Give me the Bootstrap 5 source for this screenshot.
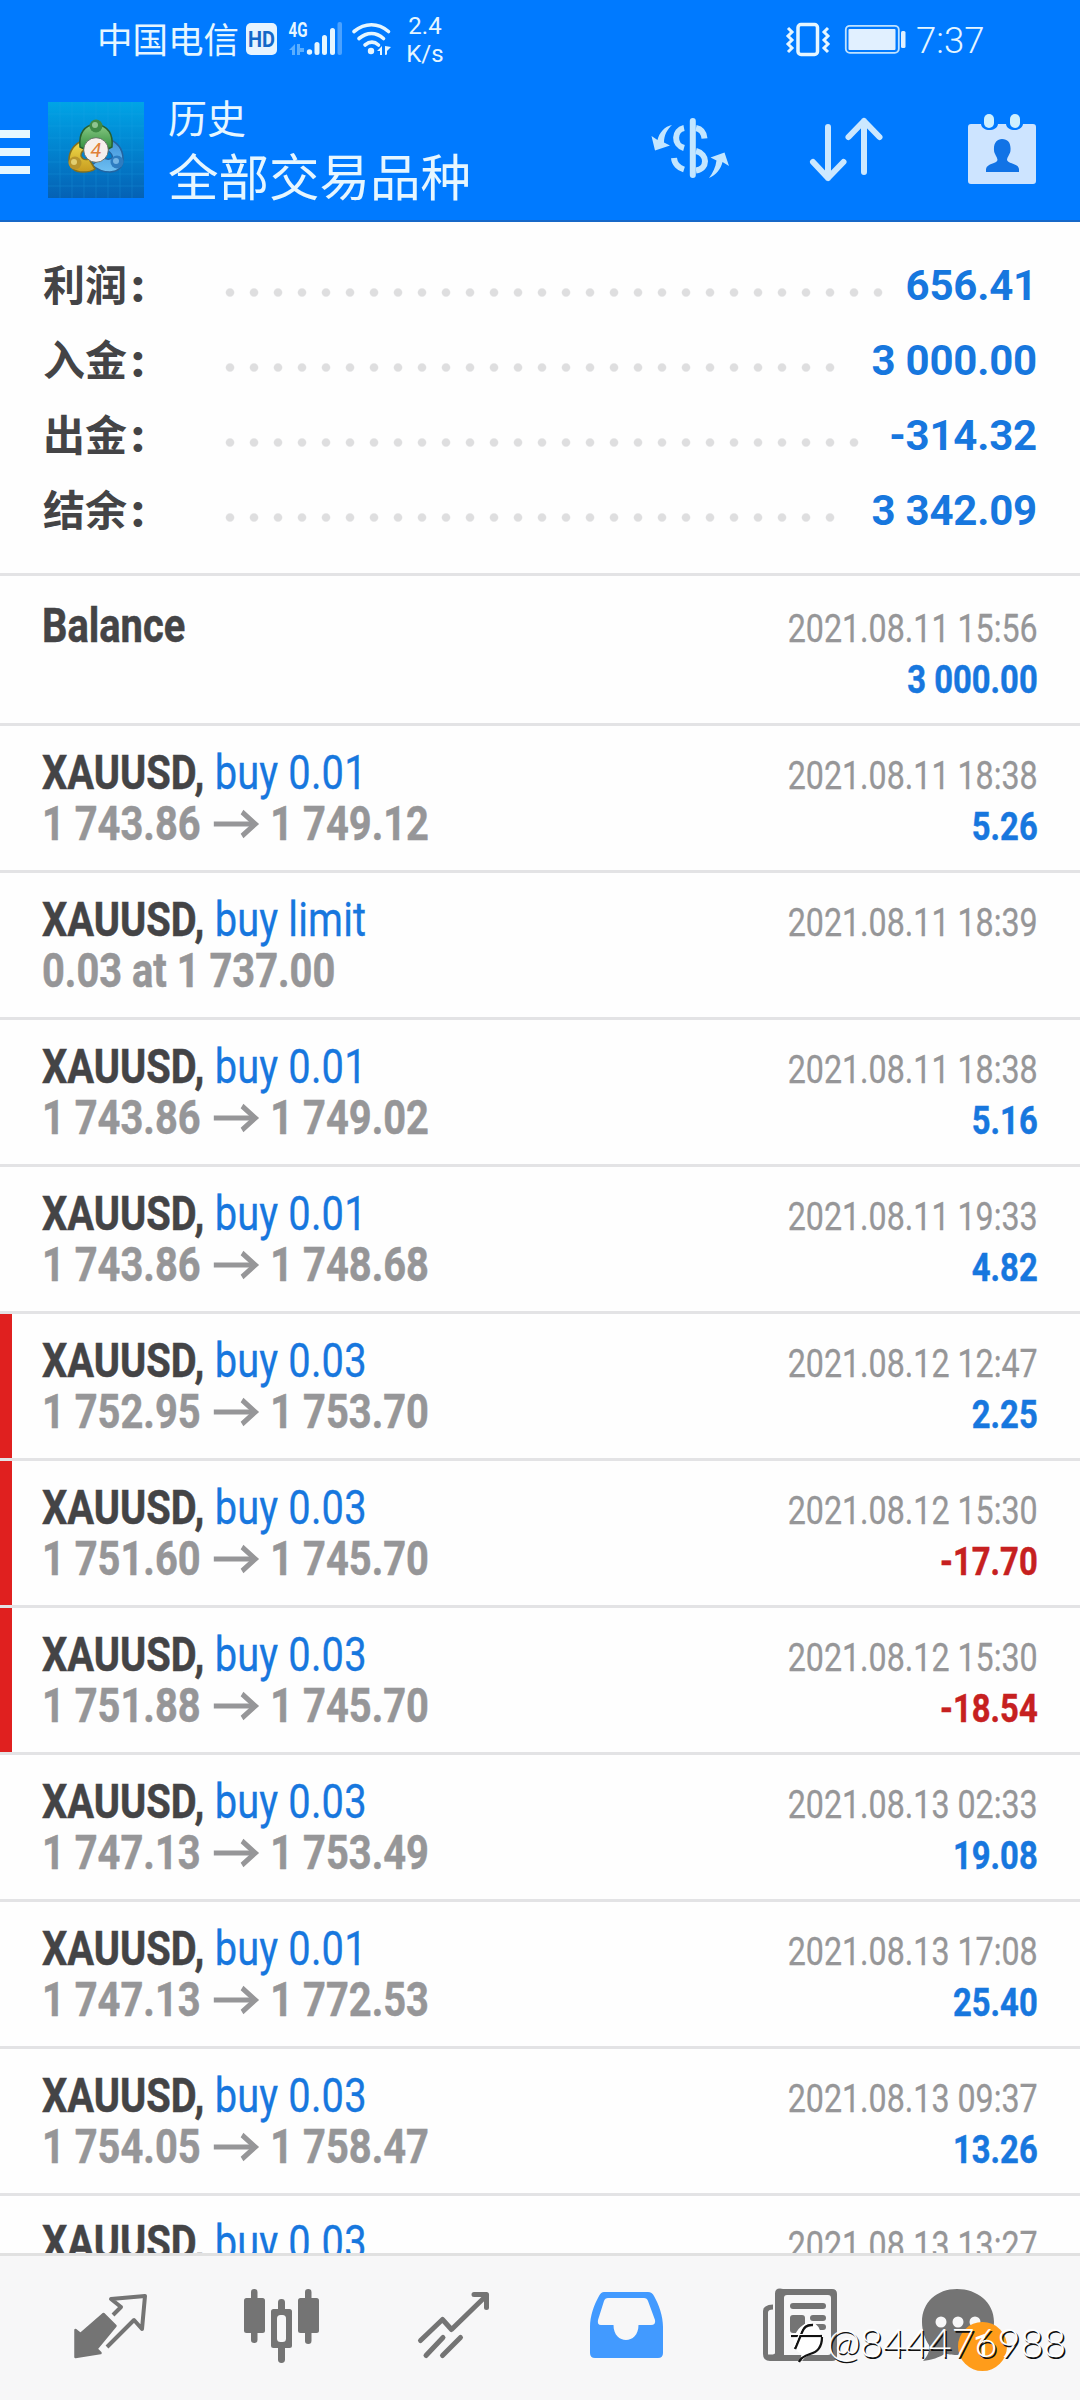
<!DOCTYPE html>
<html lang="zh-CN">
<head>
<meta charset="utf-8">
<meta name="viewport" content="width=device-width, initial-scale=1">
<title>历史</title>
<link href="https://cdn.jsdelivr.net/npm/bootstrap@5.3.0/dist/css/bootstrap.min.css" rel="stylesheet">
<style>
  :root { --brand:#007aff; --ink:#444446; --mute:#969698; --money:#1777de; --rule:#e3e3e5; }
  body { font-family:Roboto,"Noto Sans CJK SC",sans-serif; width:1080px; height:2400px; overflow:hidden; background:#fefefe; color:var(--ink); }
  svg { display:block; flex:none; overflow:visible; }
  .app-shell { height:2400px; }
  .app-head { height:222px; background:var(--brand); border-bottom:2px solid #1768c8; color:#e6f6ff; }
  .status-bar { height:78px; padding-left:97px; padding-right:96px; }
  .carrier { font-size:35.5px; line-height:78px; width:149px; padding-top:4px; }
  .net-rate { font-size:24px; line-height:28px; width:40px; padding-top:2px; margin-left:14px; }
  .clock { font-size:36.5px; font-weight:350; line-height:78px; width:68px; white-space:nowrap; margin-left:10px; padding-top:3px; }
  .title-bar { height:142px; }
  .titles { padding:17px 0 0 24px; }
  .t-small { font-size:39px; line-height:50px; }
  .t-big { font-size:50.5px; line-height:66px; margin-top:1px; }
  .totals { height:351px; padding:27px 43px 0 43px; font-weight:700; font-size:42px; }
  .total-line { height:75px; }
  .total-line .lbl { width:175px; line-height:75px; }
  .total-line .lbl i { font-style:normal; margin-left:5px; display:inline-block; -webkit-text-stroke:2px currentColor; }
  .total-line .num { color:var(--money); line-height:74px; letter-spacing:-.2px; }
  .leader { height:75px; width:calc(var(--n)*24px); background:radial-gradient(circle,#dededf 3.6px,transparent 4.800px) 0 6px/24px 75px repeat-x; }
  .deal { height:147px; border-top:3px solid var(--rule); padding:21px 42px 0 42px; font-size:48px; line-height:51px; white-space:nowrap; }
  .deal.first { height:150px; padding-top:24px; }
  .deal.flagged { background:linear-gradient(#e0201f,#e0201f) 0 0/12px 100% no-repeat; }
  .cond { transform:scaleX(.83); transform-origin:0 50%; font-weight:700; height:51px; -webkit-text-stroke:.5px currentColor; }
  .cond .sym { width:208px; }
  .cond .act { color:var(--money); font-weight:400; -webkit-text-stroke:.3px currentColor; letter-spacing:.2px; }
  .prices { color:var(--mute); }
  .rt { padding-top:4px; font-size:39px; text-align:right; }
  .rt .cond { transform:scaleX(.84); transform-origin:100% 50%; }
  .rt .stamp { color:var(--mute); font-weight:400; transform:scaleX(.826); -webkit-text-stroke:.3px currentColor; }
  .gain { color:var(--money); }
  .loss { color:#c62020; }
  .arrow-r { margin:0 14px 0 16px; }
  .deal-list { height:1680px; overflow:hidden; flex:none; }
  .tab-bar { height:147px; background:#f7f7f8; border-top:3px solid #e1e1e1; position:relative; }
  .pill-count { position:absolute; left:958px; top:66px; width:49px; height:49px; border-radius:50%; background:#ff9c1a; color:#fff; font-size:34px; line-height:49px; text-align:center; }
  .wm { position:absolute; left:790px; top:58px; color:#fff; font-family:Lato,sans-serif; font-size:40px; font-weight:300; line-height:56px; text-shadow:1.5px 1.5px .5px #111; }
  .wm span { letter-spacing:-.3px; }
</style>
</head>
<body>
<div class="app-shell d-flex flex-column">
  <header class="app-head flex-shrink-0">
    <div class="status-bar d-flex align-items-center">
      <div class="carrier flex-shrink-0">中国电信</div>
      <svg width="145" height="36" viewBox="246 21 145 36">
        <rect x="246" y="23" width="31" height="32" rx="5" fill="#e6f4ff"/>
        <text x="261.500" y="47" font-family="Roboto" font-size="22" font-weight="700" fill="#1468c8" text-anchor="middle" textLength="27" lengthAdjust="spacingAndGlyphs">HD</text>
        <text x="288.500" y="37" font-family="Roboto" font-size="20" font-weight="700" fill="#e6f6ff" textLength="19" lengthAdjust="spacingAndGlyphs">4G</text>
        <g fill="#5aaeff"><path d="M289 50l6-6v11h-3v-5zM297 44h3v4h4v4h-4v3h-3z"/></g>
        <g fill="#e6f6ff"><circle cx="309.500" cy="52" r="2.700"/><rect x="314.500" y="42" width="5" height="13" rx="2.500"/><rect x="322" y="35" width="5" height="20" rx="2.500"/><rect x="330" y="28" width="5" height="27" rx="2.500"/></g>
        <rect x="337.500" y="22" width="4.500" height="33" rx="2" fill="#4ba2ff"/>
        <g fill="none" stroke="#e6f6ff" stroke-width="3.600" stroke-linecap="round"><path d="M354 31.500c11-9 24-9 34.500 0M359 38.500c8-6.500 17-6.500 24.500 0M365 45c5-4 9-4 13.500 0"/></g>
        <circle cx="371" cy="51" r="3.200" fill="#e6f6ff"/>
        <path d="M377 51l5-5v9h-2v-4zM385 46v9l2-.5V51l4-4z" fill="#e6f6ff"/>
      </svg>
      <div class="net-rate text-center">2.4<br>K/s</div>
      <svg class="ms-auto me-3" width="42" height="34" viewBox="786 22 42 34" fill="none" stroke="#e6f6ff">
        <rect x="797" y="24.500" width="19.500" height="30" rx="3" stroke-width="3.500"/>
        <path d="M787 28l4 4-4 4 4 4-4 4 4 4-4 4M827 28l-4 4 4 4-4 4 4 4-4 4 4 4" stroke-width="3"/>
      </svg>
      <svg width="61" height="30" viewBox="844 24 61 30">
        <rect x="844.800" y="25.800" width="53" height="27" rx="4" fill="none" stroke="#bfe2ff" stroke-width="1.800"/>
        <rect x="847.500" y="29" width="47" height="21" rx="1" fill="#e1f0ff"/>
        <rect x="900" y="31" width="4.500" height="17" rx="1.500" fill="#e1f0ff"/>
      </svg>
      <div class="clock flex-shrink-0">7:37</div>
    </div>
    <div class="title-bar d-flex">
      <svg width="48" height="142" viewBox="0 78 48 142" fill="#e6f8ff"><path d="M0 130h30v8H0zM0 148h30v8H0zM0 166h30v8H0z"/></svg>
      <svg width="96" height="142" viewBox="48 78 96 142">
        <defs>
          <linearGradient id="lgBg" x1="0" y1="0" x2="0" y2="1"><stop offset="0" stop-color="#00a4e6"/><stop offset=".5" stop-color="#0283cf"/><stop offset="1" stop-color="#0561b4"/></linearGradient>
          <linearGradient id="lgG" x1="0" y1="0" x2="0" y2="1"><stop offset="0" stop-color="#8ccb86"/><stop offset="1" stop-color="#2f8c3c"/></linearGradient>
          <linearGradient id="lgY" x1="0" y1="0" x2="0" y2="1"><stop offset="0" stop-color="#f2e04e"/><stop offset="1" stop-color="#c79a1e"/></linearGradient>
          <linearGradient id="lgB" x1="0" y1="0" x2="0" y2="1"><stop offset="0" stop-color="#3c8fd8"/><stop offset="1" stop-color="#6fc0f2"/></linearGradient>
        </defs>
        <rect x="48" y="102" width="96" height="96" fill="url(#lgBg)"/>
        <path d="M60 102v96M72 102v96M84 102v96M96 102v96M108 102v96M120 102v96M132 102v96M48 114h96M48 126h96M48 138h96M48 150h96M48 162h96M48 174h96M48 186h96" stroke="#25a8ea" stroke-width=".8" opacity=".3"/>
        <g stroke-width="1.500">
          <path d="M107 138q16 6 16 21 0 12-13 13-10 0-18-7l10-8q6 4 10 1 2-3-5-8z" fill="url(#lgB)" stroke="#2464a0"/>
          <path d="M83 140q-14 7-14 20 1 12 14 12 8 0 12-3l-6-10q-6 2-8-3-1-5 7-8z" fill="url(#lgY)" stroke="#83701e"/>
          <path d="M80 147q-2-21 16-23 18 3 16 23l-6 3-10-10-10 10z" fill="url(#lgG)" stroke="#27602f"/>
        </g>
        <circle cx="96" cy="126" r="6.500" fill="#3f8a45"/><circle cx="75" cy="163" r="6.500" fill="#b8952c"/><circle cx="117" cy="162" r="6.500" fill="#2e7cc0"/>
        <circle cx="95" cy="125" r="3" fill="#8fc48f"/><circle cx="74" cy="162" r="3" fill="#e2cf70"/><circle cx="116" cy="161" r="3" fill="#74b4e4"/>
        <circle cx="96" cy="150" r="12.300" fill="#f6efec" stroke="#55605a" stroke-width=".8"/>
        <text x="96" y="157" font-family="Roboto" font-size="20" font-style="italic" text-anchor="middle" fill="#e0813a">4</text>
      </svg>
      <div class="titles d-flex flex-column">
        <div class="t-small">历史</div>
        <div class="t-big">全部交易品种</div>
      </div>
      <svg class="ms-auto" width="430" height="142" viewBox="650 78 430 142">
        <path fill="#c3e6ff" d="M672 125c-7 1-13 8-14.500 15l-6-4 3.500 14.500 15-5-6-3c0-7 3-13 8-17.500zM709 178c7-3 12-9 13.500-16l6.500 4-4.500-13.500-14 5 6 3c-1 7-3.500 12-7.500 17.500z"/>
        <g fill="none" stroke="#c3e6ff" stroke-width="6">
          <path d="M684 128c-10 2-11 17 0 20M674 158c.5 6 5 10 10 11.500M696 128c5 1 8 5 8.500 10.500M696 151c12 3 12 18 0 19.500"/>
          <path d="M692.800 121v54" stroke-linecap="round"/>
        </g>
        <g fill="none" stroke="#cce8ff" stroke-width="6" stroke-linecap="round" stroke-linejoin="round">
          <path d="M828 127v51M813 162l15 16 15.500-16M864 172v-51M848.500 137l15.500-16 15.500 16"/>
        </g>
        <path d="M971 124h10c1 8 16 8 17 0h8c1 8 16 8 17 0h10q3 0 3 3v54q0 3-3 3h-62q-3 0-3-3v-54q0-3 3-3z" fill="#cde4ff"/>
        <rect x="984" y="114" width="10" height="14" rx="5" fill="#cdf0ff"/><rect x="1010" y="114" width="10" height="14" rx="5" fill="#cdf0ff"/>
        <path d="M1002 139c6 0 9 4 8.500 11 0 4-3 6-3.500 10 1 4 11 3 12 9v3h-33v-3c1-6 11-5 11.500-9-.5-4-3.500-6-3.500-10-.5-7 3-11 8-11z" fill="#1173e6"/>
      </svg>
    </div>
  </header>

  <section class="totals flex-shrink-0">
    <div class="total-line d-flex"><div class="lbl">利润<i>:</i></div><div class="leader" style="--n:28"></div><div class="num ms-auto">656.41</div></div>
    <div class="total-line d-flex"><div class="lbl">入金<i>:</i></div><div class="leader" style="--n:26"></div><div class="num ms-auto">3 000.00</div></div>
    <div class="total-line d-flex"><div class="lbl">出金<i>:</i></div><div class="leader" style="--n:27"></div><div class="num ms-auto">-314.32</div></div>
    <div class="total-line d-flex"><div class="lbl">结余<i>:</i></div><div class="leader" style="--n:26"></div><div class="num ms-auto">3 342.09</div></div>
  </section>

  <main class="deal-list" id="deals"></main>

  <nav class="tab-bar flex-shrink-0">
    <svg width="1080" height="144" viewBox="0 2256 1080 144">
      <g fill="#747474" stroke="#747474" stroke-linejoin="round">
        <path d="M75.500 2330l5 4 23-20 12 12-19 23 4 4-25 4z" stroke-width="2.500"/>
        <path d="M113 2315l8-8-10-8 34-3-3 33-8-9-27 27" fill="none" stroke-width="4"/>
      </g>
      <g fill="#747474">
        <rect x="251" y="2289" width="6.500" height="54" rx="3.200"/><rect x="244" y="2298" width="21" height="35" rx="2.500"/>
        <rect x="305" y="2289" width="6.500" height="55" rx="3.200"/><rect x="298" y="2298" width="21" height="35" rx="2.500"/>
        <rect x="278" y="2299" width="7" height="64" rx="3.400"/><rect x="271" y="2309" width="21" height="39" rx="2.500"/>
        <rect x="277" y="2315" width="9" height="27" rx="3.500" fill="#f7f7f8"/>
      </g>
      <g fill="none" stroke="#747474" stroke-width="5" stroke-linecap="round" stroke-linejoin="round">
        <path d="M420.500 2340.500l22-21 9 10 35-34M474 2294.500h12.500v13"/><path d="M426 2355.500l17-18M442.500 2355.500l18-18"/>
      </g>
      <path fill-rule="evenodd" fill="#429aff" d="M604 2292h44q4 0 6 4c5 9 9 20 9 31v26q0 5-5 5h-63q-5 0-5-5v-26c0-11 4-22 9-31q2-4 5-4zM608 2298q-3 0-4 3l-6 19q-1 5 3 5h12.500c0 20 25 20 25 0H651q5 0 4-5l-7-19q-1-3-4-3z"/>
      <g fill="#747474">
        <path fill-rule="evenodd" d="M783 2289h49q5 0 5 5v62q0 5-5 5h-62q-7 0-7-7v-43q0-6 10-6.500v5q-5 0-5 3v42h5l2-1v-60q0-5 5-5zM787 2295q-3 0-3 3v57h44q3 0 3-3v-54q0-3-3-3z"/>
        <rect x="790" y="2303" width="36" height="6" rx="3"/><rect x="790" y="2315" width="15" height="18" rx="3"/><rect x="810" y="2315" width="16" height="6" rx="3"/><rect x="810" y="2324" width="16" height="6" rx="3"/>
        <path d="M957 2289c20 0 37 13 37 33 0 22-17 33-37 33-6 0-9-1-12-1.500-5 4-14 6.500-22 7.500 5-5 7-11 6-16-4-6-7-14-7-23 0-20 15-33 35-33z"/>
      </g>
      <g fill="#f7f7f8"><circle cx="941" cy="2322" r="5.500"/><circle cx="958" cy="2322" r="5.500"/><circle cx="975" cy="2322" r="5.500"/></g>
    </svg>
    <div class="pill-count">1</div>
    <div class="wm d-flex align-items-center">
      <svg width="37" height="44" viewBox="790 2322 37 44">
        <path d="M794 2340q4-14 18-16 8 3 9 13 1 14-9 19-7 2-10 7-2-5 0-7-10-4-8-16z" fill="#fff"/>
        <path d="M813 2327q-8-1-11 7l-7 17" fill="none" stroke="#111" stroke-width="2.500"/><path d="M791 2338h31" stroke="#111" stroke-width="2.200"/>
        <path d="M822 2339q0 14-12 17-9 3-11 8" fill="none" stroke="#111" stroke-width="2.200"/>
        <path d="M812 2325q-8-1-11 7l-7 17M789 2336.500h31" fill="none" stroke="#fff" stroke-width="1.200"/>
      </svg><span>@844476988</span>
    </div>
  </nav>
</div>
<script>
  const deals = [
    { name:'Balance', act:'', line:'', time:'2021.08.11 15:56', pl:'3 000.00' },
    { act:'buy 0.01', line:'1 743.86>1 749.12', time:'2021.08.11 18:38', pl:'5.26' },
    { act:'buy limit', line:'0.03 at 1 737.00', time:'2021.08.11 18:39', pl:'' },
    { act:'buy 0.01', line:'1 743.86>1 749.02', time:'2021.08.11 18:38', pl:'5.16' },
    { act:'buy 0.01', line:'1 743.86>1 748.68', time:'2021.08.11 19:33', pl:'4.82' },
    { act:'buy 0.03', line:'1 752.95>1 753.70', time:'2021.08.12 12:47', pl:'2.25', flag:1 },
    { act:'buy 0.03', line:'1 751.60>1 745.70', time:'2021.08.12 15:30', pl:'-17.70', flag:1 },
    { act:'buy 0.03', line:'1 751.88>1 745.70', time:'2021.08.12 15:30', pl:'-18.54', flag:1 },
    { act:'buy 0.03', line:'1 747.13>1 753.49', time:'2021.08.13 02:33', pl:'19.08' },
    { act:'buy 0.01', line:'1 747.13>1 772.53', time:'2021.08.13 17:08', pl:'25.40' },
    { act:'buy 0.03', line:'1 754.05>1 758.47', time:'2021.08.13 09:37', pl:'13.26' },
    { act:'buy 0.03', line:'', time:'2021.08.13 13:27', pl:'' }
  ];
  const arrow = '<svg class="arrow-r" width="54" height="34" viewBox="0 0 54 34" fill="none" stroke="#969698"><path d="M0 17h50" stroke-width="5"/><path d="M34 5l16 12-16 12" stroke-width="5.500"/></svg>';
  document.getElementById('deals').innerHTML = deals.map(d => `
    <div class="deal d-flex justify-content-between ${d.name ? 'first' : ''} ${d.flag ? 'flagged' : ''}">
      <div>
        <div class="cond d-flex"><span class="sym">${d.name || 'XAUUSD,'}</span><span class="act">${d.act}</span></div>
        <div class="cond prices d-flex align-items-center">${d.line.split('>').map(t => `<span>${t}</span>`).join(arrow)}</div>
      </div>
      <div class="rt">
        <div class="cond stamp">${d.time}</div>
        <div class="cond ${d.pl[0] === '-' ? 'loss' : 'gain'}">${d.pl}</div>
      </div>
    </div>`).join('');
</script>
<script src="https://cdn.jsdelivr.net/npm/bootstrap@5.3.0/dist/js/bootstrap.bundle.min.js"></script>
</body>
</html>
